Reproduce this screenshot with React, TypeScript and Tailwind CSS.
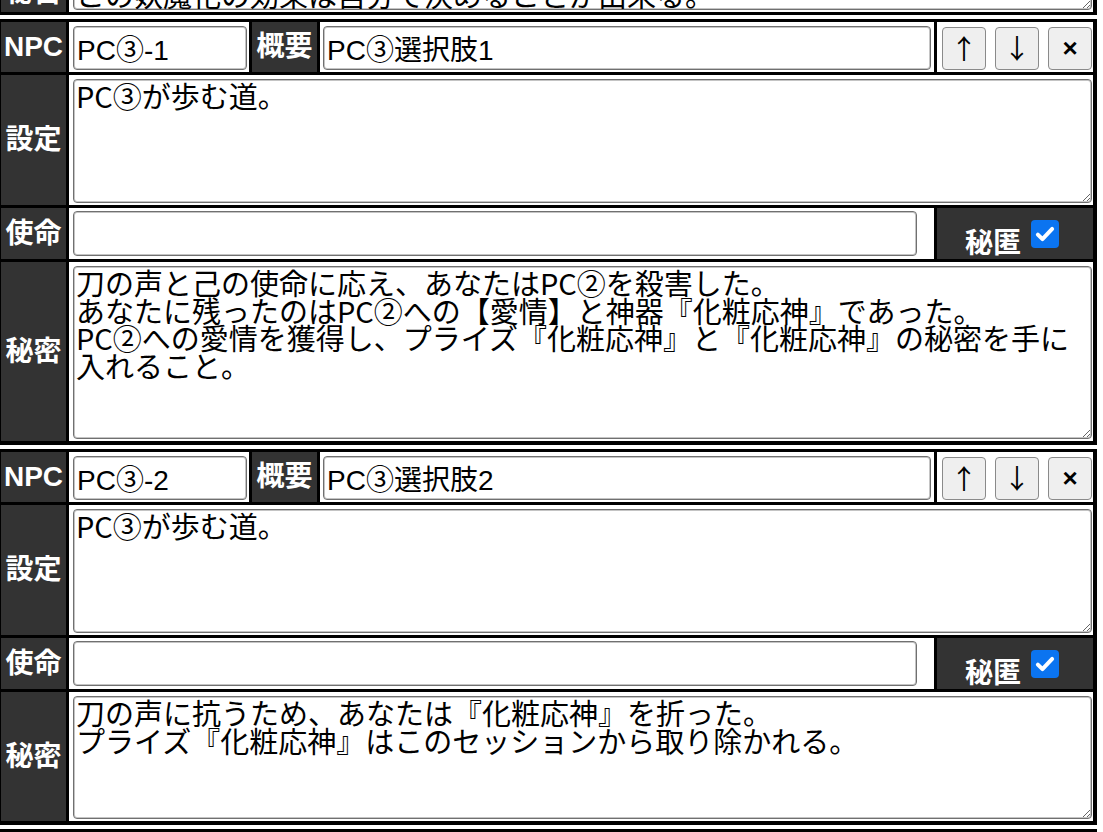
import React from 'react'

type Entry = {
  npc: string
  summary: string
  setting: string
  mission: string
  secret: string
  secretH: number
}

const entries: Entry[] = [
  {
    npc: 'PC③-1',
    summary: 'PC③選択肢1',
    setting: 'PC③が歩む道。',
    mission: '',
    secret:
      '刀の声と己の使命に応え、あなたはPC②を殺害した。\nあなたに残ったのはPC②への【愛情】と神器『化粧応神』であった。\nPC②への愛情を獲得し、プライズ『化粧応神』と『化粧応神』の秘密を手に\n入れること。',
    secretH: 173,
  },
  {
    npc: 'PC③-2',
    summary: 'PC③選択肢2',
    setting: 'PC③が歩む道。',
    mission: '',
    secret: '刀の声に抗うため、あなたは『化粧応神』を折った。\nプライズ『化粧応神』はこのセッションから取り除かれる。',
    secretH: 123,
  },
  {
    npc: 'PC③-3',
    summary: 'PC③選択肢3',
    setting: 'PC③が歩む道。',
    mission: '',
    secret: '',
    secretH: 123,
  },
]

const label =
  "w-[65px] shrink-0 bg-[#333333] text-white font-bold text-[28px] flex items-center justify-center font-['Liberation_Sans','Noto_Sans_CJK_JP',sans-serif]"
const field =
  'bg-white text-black border border-[#707070] rounded-[4px] shadow-[inset_0_0_0_1px_#c4c4c4] outline-none'
const inputCls = field + " px-[3px] text-[28px] font-['Liberation_Sans','Noto_Sans_CJK_JP',sans-serif]"
const areaCls =
  field +
  " px-[2px] py-[2px] text-[29px] leading-[27.5px] font-['Noto_Sans_CJK_JP',sans-serif] whitespace-pre-wrap"
const btn =
  'w-[44px] h-[43px] bg-[#efefef] border border-[#8a8a8a] rounded-[4px] flex items-center justify-center text-black'

const Check = () => (
  <span className="w-[28px] h-[28px] mb-[7px] rounded-[4px] bg-[#0b74f0] flex items-center justify-center shrink-0">
    <svg width="22" height="22" viewBox="0 0 20 20">
      <path d="M3.5 10.5l4.2 4.2 8.8-9.4" fill="none" stroke="white" strokeWidth="3.6" strokeLinecap="round" strokeLinejoin="round" />
    </svg>
  </span>
)

const Block = ({ e }: { e: Entry }) => (
  <div className="-ml-[2px] w-[1099px] shrink-0 border-t-[3px] border-l-[3px] border-r-[4px] border-b-[4px] border-black bg-black flex flex-col gap-[3px]">
    <div className="flex gap-[3px] h-[50px]">
      <div className={label}>NPC</div>
      <div className="w-[180px] bg-white pt-[4px] pl-[4px]">
        <input defaultValue={e.npc} className={inputCls + ' w-[174px] h-[44px]'} />
      </div>
      <div className={label}>概要</div>
      <div className="w-[614px] bg-white pt-[4px] pl-[3px]">
        <input defaultValue={e.summary} className={inputCls + ' w-[608px] h-[44px]'} />
      </div>
      <div className="w-[156px] bg-white flex items-start gap-[9px] pt-[5px] pl-[5px]">
        <button className={btn + " text-[27px] font-['Noto_Sans_CJK_JP',sans-serif]"}>↑</button>
        <button className={btn + " text-[27px] font-['Noto_Sans_CJK_JP',sans-serif]"}>↓</button>
        <button className={btn + " text-[26px] font-bold font-['Liberation_Sans',sans-serif]"}>×</button>
      </div>
    </div>

    <div className="flex gap-[3px] h-[130px]">
      <div className={label}>設定</div>
      <div className="w-[1024px] bg-white pt-[4px] pl-[4px]">
        <textarea defaultValue={e.setting} className={areaCls + ' w-[1019px] h-[124px]'} />
      </div>
    </div>

    <div className="flex gap-[3px] h-[51px]">
      <div className={label}>使命</div>
      <div className="w-[865px] bg-white pt-[3px] pl-[4px]">
        <input defaultValue={e.mission} className={inputCls + ' w-[844px] h-[45px]'} />
      </div>
      <div className="w-[156px] bg-[#333333] flex items-end justify-center gap-[10px] pb-[4px] pr-[6px] text-white font-bold text-[28px] font-['Noto_Sans_CJK_JP',sans-serif]">
        <span className="leading-none">秘匿</span>
        <Check />
      </div>
    </div>

    <div className="flex gap-[3px]" style={{ height: e.secretH + 6 }}>
      <div className={label}>秘密</div>
      <div className="w-[1024px] bg-white pt-[4px] pl-[4px]">
        <textarea defaultValue={e.secret} className={areaCls + ' w-[1019px]'} style={{ height: e.secretH }} />
      </div>
    </div>
  </div>
)

export default function App() {
  return (
    <div className="w-[1103px] h-[832px] overflow-hidden bg-white font-['Liberation_Sans','Noto_Sans_CJK_JP',sans-serif]">
      {/* tail of the previous entry */}
      <div className="h-[15px] overflow-hidden flex flex-col justify-end">
        <div className="-ml-[2px] w-[1099px] h-[41px] shrink-0 border-l-[3px] border-r-[4px] border-b-[3px] border-black bg-black flex gap-[3px]">
          <div className={label}>秘密</div>
          <div className="w-[1024px] bg-white pt-[4px] pl-[4px]">
            <textarea
              defaultValue="この妖魔化の効果は自分で決めることが出来る。"
              className={areaCls + ' w-[1019px] h-[32px] overflow-hidden'}
            />
          </div>
        </div>
      </div>

      <div className="flex flex-col gap-[4px] mt-[4px]">
        {entries.map((e) => (
          <Block key={e.npc} e={e} />
        ))}
      </div>
    </div>
  )
}
